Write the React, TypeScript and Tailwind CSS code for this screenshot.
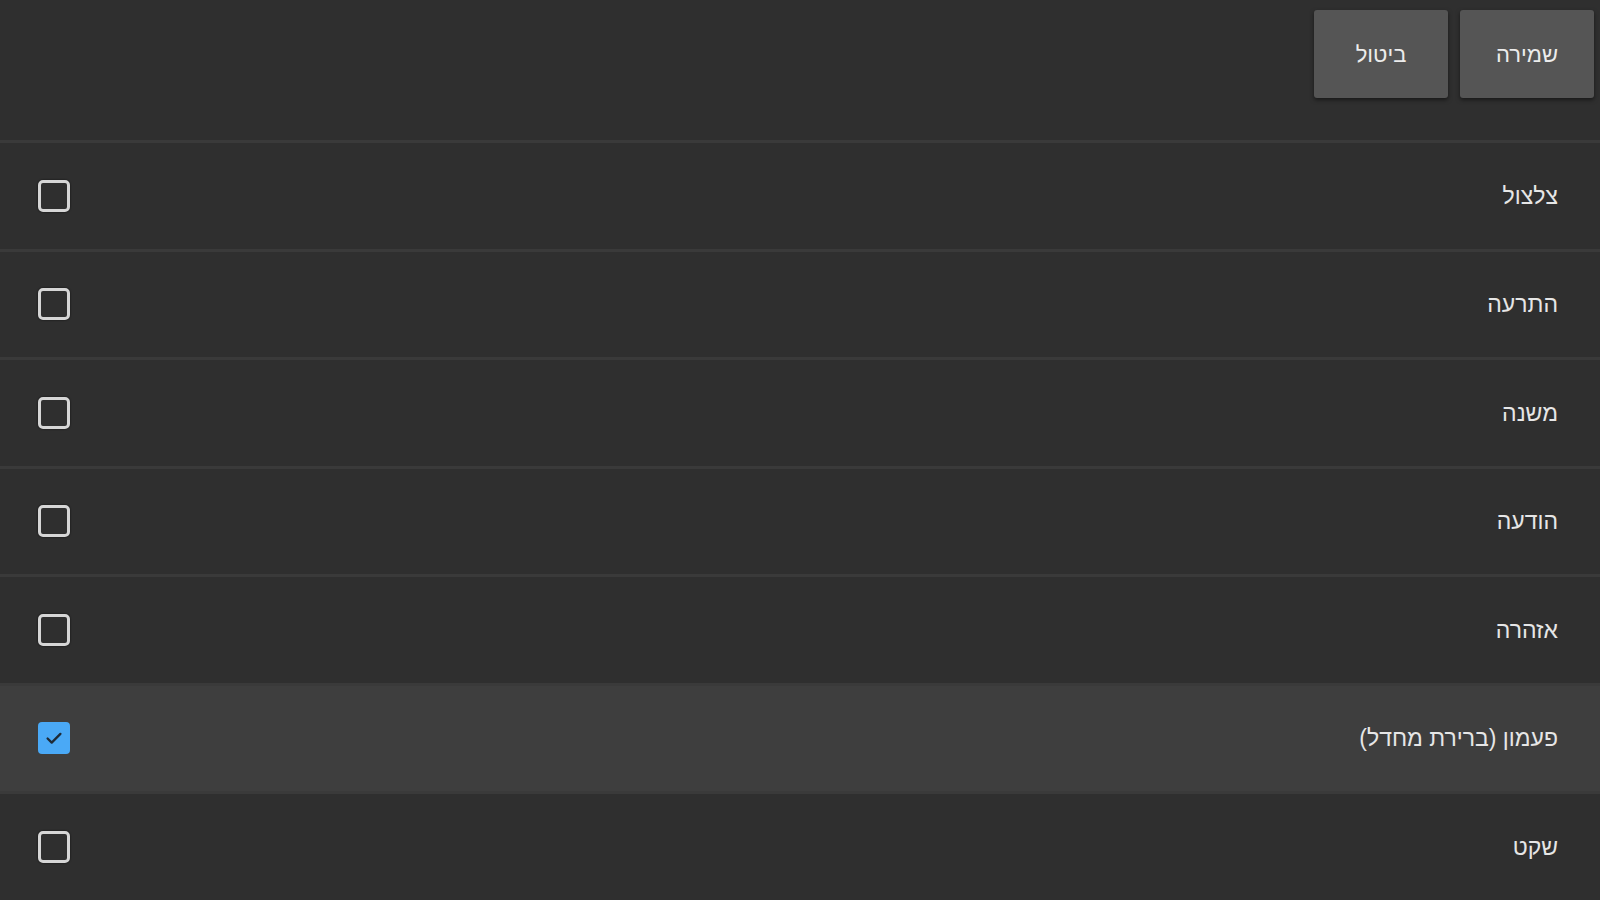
import { useState } from "react";

const SOUNDS = ["צלצול", "התרעה", "משנה", "הודעה", "אזהרה", "פעמון (ברירת מחדל)", "שקט"];

export default function App() {
  const [selected, setSelected] = useState(5);

  return (
    <div
      dir="rtl"
      className="h-[900px] w-[1600px] overflow-hidden bg-[#2f2f2f] text-[#e6e6e6]"
      style={{ fontFamily: '"Liberation Sans", "DejaVu Sans", sans-serif' }}
    >
      <div className="flex h-[140px] items-start gap-[12px] pr-[6px] pt-[10px]">
        <button className="h-[88px] w-[134px] rounded-[3px] bg-[#555555] text-[22px] text-[#ececec] shadow-[0_2px_4px_rgba(0,0,0,0.5)]">
          שמירה
        </button>
        <button className="h-[88px] w-[134px] rounded-[3px] bg-[#555555] text-[22px] text-[#ececec] shadow-[0_2px_4px_rgba(0,0,0,0.5)]">
          ביטול
        </button>
      </div>
      {SOUNDS.map((name, i) => {
        const checked = i === selected;
        return (
          <div
            key={name}
            onClick={() => setSelected(i)}
            className={`flex h-[108.5px] items-center justify-between border-t-[3px] border-[#3a3a3a] pl-[38px] pr-[42px] ${
              checked ? "bg-[#3e3e3e]" : "bg-[#2f2f2f]"
            }`}
          >
            <span className="text-[23px] text-[#e6e6e6]">{name}</span>
            {checked ? (
              <span className="flex h-[32px] w-[32px] items-center justify-center rounded-[4px] bg-[#4aa9f6]">
                <svg width="22" height="22" viewBox="0 0 24 24" fill="none">
                  <path d="M5 12.5l4.5 4.5L19 7.5" stroke="#1e2a36" strokeWidth="2.5" strokeLinecap="round" strokeLinejoin="round" />
                </svg>
              </span>
            ) : (
              <span className="h-[32px] w-[32px] rounded-[5px] border-[3px] border-[#d6d6d6] bg-[#2f2f2f] shadow-[0_0_2px_rgba(0,0,0,0.8)]" />
            )}
          </div>
        );
      })}
    </div>
  );
}
